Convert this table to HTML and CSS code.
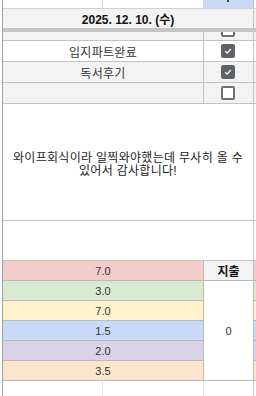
FILE: index.html
```html
<!DOCTYPE html>
<html lang="ko">
<head>
<meta charset="utf-8">
<link rel="stylesheet" href="styles.css">
</head>
<body>
<div class="sheet">
  <div class="row r0">
    <div class="cell a"></div>
    <div class="cell b"></div>
    <div class="cell c blue"><span class="mark"></span></div>
    <div class="cell d"></div>
  </div>
  <div class="row rdate">
    <div class="cell span3 date">2025. 12. 10. (수)</div>
    <div class="cell d gray"></div>
  </div>
  <div class="freeze"></div>
  <div class="row r2">
    <div class="cell span2 gray"></div>
    <div class="cell c gray cbcell top"><span class="cb"></span></div>
    <div class="cell d gray"></div>
  </div>
  <div class="row rtask">
    <div class="cell span2 label">입지파트완료</div>
    <div class="cell c cbcell"><span class="cb on"><svg viewBox="0 0 12 12" width="12" height="12"><polyline points="2.6,6.2 5,8.5 9.4,3.6" fill="none" stroke="#fff" stroke-width="1.5"/></svg></span></div>
    <div class="cell d"></div>
  </div>
  <div class="row rtask gray">
    <div class="cell span2 label">독서후기</div>
    <div class="cell c cbcell"><span class="cb on"><svg viewBox="0 0 12 12" width="12" height="12"><polyline points="2.6,6.2 5,8.5 9.4,3.6" fill="none" stroke="#fff" stroke-width="1.5"/></svg></span></div>
    <div class="cell d"></div>
  </div>
  <div class="row rtask gray">
    <div class="cell span2 label"></div>
    <div class="cell c cbcell"><span class="cb"></span></div>
    <div class="cell d"></div>
  </div>
  <div class="row rnote">
    <div class="cell span3 note">와이프회식이라 일찍와야했는데 무사히 올 수 있어서 감사합니다!</div>
    <div class="cell d"></div>
  </div>
  <div class="row rblank">
    <div class="cell span3"></div>
    <div class="cell d"></div>
  </div>
  <div class="scores">
    <div class="val pink">7.0</div>
    <div class="head">지출</div>
    <div class="dd pink"></div>
    <div class="val green">3.0</div>
    <div class="zero">0</div>
    <div class="dd green"></div>
    <div class="val yellow">7.0</div>
    <div class="dd yellow"></div>
    <div class="val blue">1.5</div>
    <div class="dd blue"></div>
    <div class="val purple">2.0</div>
    <div class="dd purple"></div>
    <div class="val orange">3.5</div>
    <div class="dd orange"></div>
  </div>
  <div class="row rbottom">
    <div class="cell a faint"></div>
    <div class="cell b faint"></div>
    <div class="cell c"></div>
    <div class="cell d"></div>
  </div>
</div>
</body>
</html>
```

FILE: styles.css
```css
* { box-sizing: border-box; }
html, body { margin: 0; padding: 0; background: #fff; }
body {
  width: 256px;
  height: 396px;
  overflow: hidden;
  font-family: "Liberation Sans", "Noto Sans CJK KR", sans-serif;
  font-size: 11px;
  color: #222;
}
.sheet {
  margin-left: 2px;
  border-left: 1px solid #a3a3a3;
  width: 254px;
}
.row {
  display: grid;
  grid-template-columns: 100px 101px 50px 1fr;
  border-bottom: 1px solid #c3c3c3;
}
.cell {
  border-right: 1px solid #c3c3c3;
  display: flex;
  align-items: center;
  justify-content: center;
  overflow: hidden;
}
.cell.d { border-right: 0; }
.span2 { grid-column: 1 / 3; }
.span3 { grid-column: 1 / 4; }
.gray { background: #f3f3f3; }
.blue { background: #c9daf8; }
.r0 { height: 9px; border-bottom-color: #d0d0d0; }
.r0 .a { border-right-color: #d6d6d6; }
.r0 .b { border-right-color: #c9daf8; }
.mark {
  width: 2px; height: 2px; background: #444;
  align-self: flex-start;
  margin-left: -2px;
}
.rdate { height: 19px; border-bottom: 0; }
.date {
  background: #f3f3f3;
  font-weight: bold;
  font-size: 12px;
  color: #111;
}
.freeze { height: 4px; background: #c5c5c5; }
.r2 { height: 9px; }
.rtask { height: 21px; }
.label { font-size: 12px; color: #333; letter-spacing: 0.3px; }
.cbcell { position: relative; }
.cb {
  width: 14px; height: 14px;
  border: 2px solid #707070;
  border-radius: 2px;
  background: #fff;
  display: flex;
  align-items: center;
  justify-content: center;
  margin-left: -2px;
}
.cb.on { background: #5f6368; border-color: #5f6368; }
.cb svg { display: block; }
.top { align-items: flex-end; }
.top .cb { margin-bottom: 3px; flex: none; }
.rnote { height: 117px; }
.note {
  text-align: center;
  font-size: 12px;
  line-height: 13px;
  padding: 5px 2px 0;
  color: #222;
  word-break: keep-all;
  letter-spacing: 0.3px;
}
.rblank { height: 40px; }
.scores {
  display: grid;
  grid-template-columns: 201px 50px 1fr;
  grid-template-rows: repeat(6, 20px);
}
.val {
  grid-column: 1;
  display: flex; align-items: center; justify-content: center;
  border-bottom: 1px solid #b9b9b9;
  border-right: 1px solid #b9b9b9;
  font-size: 11px;
  color: #333;
}
.dd { grid-column: 3; border-bottom: 1px solid #b9b9b9; }
.head {
  grid-column: 2;
  background: #f3f3f3;
  border-bottom: 1px solid #b9b9b9;
  border-right: 1px solid #b9b9b9;
  display: flex; align-items: center; justify-content: center;
  font-weight: bold;
  font-size: 12px;
  color: #111;
}
.zero {
  grid-column: 2;
  grid-row: 2 / 7;
  background: #fff;
  border-bottom: 1px solid #b9b9b9;
  border-right: 1px solid #b9b9b9;
  display: flex; align-items: center; justify-content: center;
  font-size: 11px;
  color: #333;
}
.pink { background: #f4cccc; }
.green { background: #d9ead3; }
.yellow { background: #fff2cc; }
.blue { background: #c9daf8; }
.purple { background: #d9d2e9; }
.orange { background: #fce5cd; }
.rbottom { height: 20px; border-bottom: 0; }
.rbottom .faint { border-right-color: #e2e2e2; }
.rbottom .c { border-right-color: #c3c3c3; }
```
